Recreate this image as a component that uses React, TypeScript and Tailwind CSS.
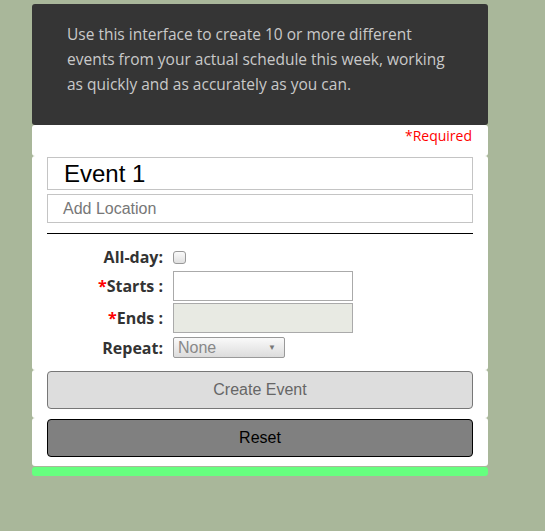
export default function App() {
  const labelCls =
    "text-right pr-[10px] font-bold text-[16px] leading-[20px] text-[#333] font-['Open_Sans',sans-serif]";

  return (
    <div className="min-h-[531px] w-full bg-[#a9b79a] pt-[4px]">
      <div className="ml-[32px] w-[456px]">
        <div className="rounded-[3px] bg-[#353535] pl-[35px] pr-[30px] pt-[18px] pb-[28px] font-['Open_Sans',sans-serif] text-[15.5px] leading-[25px] text-[#c9c9c9]">
          Use this interface to create 10 or more different events from your
          actual schedule this week, working as quickly and as accurately as
          you can.
        </div>

        <div className="h-[31px] rounded-[3px] bg-white pr-[16px] pt-[1px] text-right font-['Open_Sans',sans-serif] text-[14px] leading-[20px] text-[#ff0000]">
          *Required
        </div>

        <div className="rounded-[3px] bg-white px-[15px] pt-[1px] pb-[12px] font-['Liberation_Sans',Arial,sans-serif]">
          <div className="flex h-[33px] items-center border border-[#c4c4c4] pl-[16px] text-[24px] text-black">
            Event 1
          </div>
          <div className="mt-[4px] flex h-[29px] items-center border border-[#c4c4c4] pl-[15px] text-[16px] text-[#777]">
            Add Location
          </div>
          <div className="mt-[10px] h-px bg-black" />

          <div className="mt-[13px] flex flex-col">
            <div className="flex h-[20px] items-center">
              <div className={`${labelCls} w-[126px]`}>All-day:</div>
              <div className="h-[13px] w-[13px] rounded-[3px] border border-[#999] bg-gradient-to-b from-[#fafafa] to-[#e0e0e0]" />
            </div>

            <div className="mt-[4px] flex h-[30px] items-center">
              <div className={`${labelCls} w-[126px]`}>
                <span className="text-[#ff0000]">*</span>Starts :
              </div>
              <div className="h-[30px] w-[180px] border border-[#aaa] bg-white" />
            </div>

            <div className="mt-[2px] flex h-[30px] items-center">
              <div className={`${labelCls} w-[126px]`}>
                <span className="text-[#ff0000]">*</span>Ends :
              </div>
              <div className="h-[30px] w-[180px] border border-[#aaa] bg-[#e8eae3]" />
            </div>

            <div className="mt-[4px] flex h-[21px] items-center">
              <div className={`${labelCls} w-[126px]`}>Repeat:</div>
              <div className="flex h-[21px] w-[112px] items-center justify-between rounded-[2px] border border-[#999] bg-gradient-to-b from-[#fafafa] to-[#dcdcdc] pl-[4px] pr-[8px] text-[16px] leading-[19px] text-[#888]">
                <span>None</span>
                <span className="text-[8px] text-[#777]">▼</span>
              </div>
            </div>
          </div>
        </div>

        <div className="rounded-[3px] bg-white px-[15px] pt-[1px] pb-[9px] font-['Liberation_Sans',Arial,sans-serif]">
          <div className="flex h-[38px] items-center justify-center rounded-[4px] border border-[#777] bg-[#dddddd] text-[16px] text-[#666]">
            Create Event
          </div>
        </div>

        <div className="rounded-[3px] bg-white px-[15px] pt-[1px] pb-[9px] font-['Liberation_Sans',Arial,sans-serif]">
          <div className="flex h-[38px] items-center justify-center rounded-[4px] border border-black bg-[#808080] text-[16px] text-black">
            Reset
          </div>
        </div>

        <div className="mt-[1px] h-[9px] rounded-[3px] bg-[#66ff7f]" />
      </div>
    </div>
  );
}
